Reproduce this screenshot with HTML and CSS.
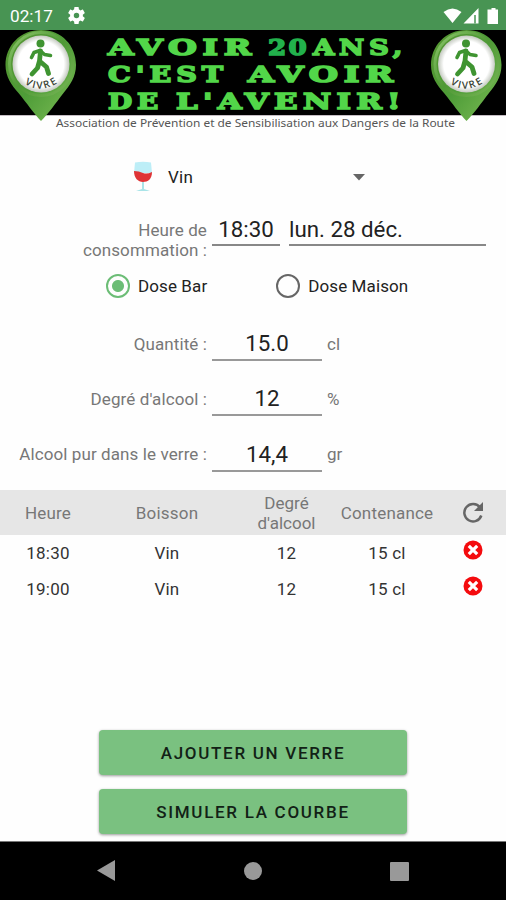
FILE: index.html
```html
<!DOCTYPE html>
<html lang="fr">
<head>
<meta charset="utf-8">
<title>Vivre</title>
<link rel="stylesheet" href="styles.css">
</head>
<body>
<div class="app">
  <header class="status">
    <span class="clock">02:17</span>
    <svg class="gear" width="17" height="17" viewBox="2 2 20 20"><path fill="#fff" d="M19.43 12.98c.04-.32.07-.64.07-.98s-.03-.66-.07-.98l2.11-1.65c.19-.15.24-.42.12-.64l-2-3.46c-.12-.22-.39-.3-.61-.22l-2.49 1c-.52-.4-1.08-.73-1.69-.98l-.38-2.65C14.46 2.18 14.25 2 14 2h-4c-.25 0-.46.18-.49.42l-.38 2.65c-.61.25-1.17.59-1.69.98l-2.49-1c-.23-.09-.49 0-.61.22l-2 3.46c-.13.22-.07.49.12.64l2.11 1.65c-.04.32-.07.65-.07.98s.03.66.07.98l-2.11 1.65c-.19.15-.24.42-.12.64l2 3.46c.12.22.39.3.61.22l2.49-1c.52.4 1.08.73 1.69.98l.38 2.65c.03.24.24.42.49.42h4c.25 0 .46-.18.49-.42l.38-2.65c.61-.25 1.17-.59 1.69-.98l2.49 1c.23.09.49 0 .61-.22l2-3.46c.12-.22.07-.49-.12-.64zM12 15.200a3.200 3.200 0 1 1 0-6.400 3.200 3.200 0 0 1 0 6.400z"/></svg>
    <svg class="signals" width="56" height="18" viewBox="0 0 56 18"><path fill="#fff" d="M.5 5Q9.500-2 18.500 5l-9 11ZM20.500 16.500 35.500 1v15.500ZM46.500 2.500h2V1h4v1.500H55V17H44.500V2.500Z"/><path d="M32 8v8.500" stroke="#489453" stroke-width="1.500"/></svg>
  </header>

  <svg class="banner" width="506" height="105" viewBox="0 30 506 105">
    <defs>
      <linearGradient id="pinFill" x1="0" y1="0" x2="1" y2="1"><stop offset="0" stop-color="#55942f"/><stop offset=".5" stop-color="#4e9c38"/><stop offset=".75" stop-color="#66ad47"/><stop offset="1" stop-color="#3c7d25"/></linearGradient>
      <linearGradient id="ring" x1="0" y1="0" x2="1" y2="1"><stop offset="0" stop-color="#8cc66b"/><stop offset=".5" stop-color="#4f9835"/><stop offset="1" stop-color="#79b758"/></linearGradient>
      <radialGradient id="disc"><stop offset=".8" stop-color="#fff"/><stop offset="1" stop-color="#c4c9c0"/></radialGradient>
      <path id="arc" d="M24.500 83.500Q41 95.500 62 80"/>
      <g id="pin">
        <path fill="url(#pinFill)" d="M41 30C20 30 5.500 46 5.500 65c0 12 6 20 13 28 9 11 15 20 22.500 28 8-8 14-17 22.500-28C70 85 76 77 76 65 76 46 62 30 41 30Z"/>
        <circle cx="41" cy="64" r="31.500" fill="none" stroke="url(#ring)" stroke-width="3"/>
        <circle cx="41" cy="64" r="28.500" fill="url(#disc)"/>
        <circle cx="40.500" cy="43.500" r="4" fill="#3f9431"/>
        <path fill="none" stroke="#3f9431" stroke-width="3.600" stroke-linecap="round" stroke-linejoin="round" d="M31.500 57.500 34 52.500 40 50.500 44.500 54.500 50.500 55.500"/>
        <path fill="none" stroke="#3f9431" stroke-width="4.800" stroke-linecap="round" stroke-linejoin="round" d="M40.500 51 39.500 61 46.500 67 48.500 73.500M39.500 61 37.500 68 32 74"/>
        <text class="pin-label"><textPath href="#arc">VIVRE</textPath></text>
      </g>
    </defs>
    <path fill="#000" d="M0 30h506v85H0z"/>
    <path stroke="#c5bdc4" d="M0 115.500h506"/>
    <g class="slogan">
      <text x="108" y="54.500" textLength="149" lengthAdjust="spacingAndGlyphs">AVOIR</text>
      <text class="twenty" x="268" y="54.500" textLength="41" lengthAdjust="spacingAndGlyphs">20</text>
      <text x="313" y="54.500" textLength="94" lengthAdjust="spacingAndGlyphs">ANS,</text>
      <text x="108" y="81.500" textLength="120" lengthAdjust="spacingAndGlyphs">C'EST</text>
      <text x="248" y="81.500" textLength="151" lengthAdjust="spacingAndGlyphs">AVOIR</text>
      <text x="108" y="108.500" textLength="55" lengthAdjust="spacingAndGlyphs">DE</text>
      <text x="176" y="108.500" textLength="230" lengthAdjust="spacingAndGlyphs">L'AVENIR!</text>
    </g>
    <text class="association" x="56" y="127" textLength="399" lengthAdjust="spacingAndGlyphs">Association de Prévention et de Sensibilisation aux Dangers de la Route</text>
    <use href="#pin"/>
    <use href="#pin" x="425.500"/>
  </svg>

  <main class="form">
    <div class="spinner">
      <svg width="20" height="32" viewBox="0 0 20 32"><path fill="#bdeef7" d="M2 1.500Q10 0 18 1.500L19 12H1Z"/><path fill="#df3436" d="M1 10q5 0 9 2 4 1.500 9-1c0 7-4 10-9 10S1 17 1 10Z"/><path fill="#a9e4e8" d="M9 21h2v7l6 2H3l6-2Z"/></svg>
      <span class="spinner-text">Vin</span>
      <svg class="caret" width="12" height="7" viewBox="0 0 12 7"><path fill="#666" d="M0 0h12L6 6.500Z"/></svg>
    </div>
    <div class="row row-time">
      <label class="label">Heure de<br>consommation :</label>
      <span class="field time">18:30</span>
      <span class="field date">lun. 28 déc.</span>
    </div>
    <div class="radios">
      <span class="radio on"></span><span class="radio-text">Dose Bar</span>
      <span class="radio second"></span><span class="radio-text">Dose Maison</span>
    </div>
    <div class="row"><label class="label">Quantité :</label><span class="field">15.0</span><span class="unit">cl</span></div>
    <div class="row"><label class="label">Degré d'alcool :</label><span class="field">12</span><span class="unit">%</span></div>
    <div class="row"><label class="label">Alcool pur dans le verre :</label><span class="field">14,4</span><span class="unit">gr</span></div>
  </main>

  <section class="drinks">
    <div class="line head">
      <span>Heure</span><span>Boisson</span><span class="degree">Degré<br>d'alcool</span><span>Contenance</span>
      <svg width="24" height="24" viewBox="0 0 24 24"><path fill="none" stroke="#666" stroke-width="2.500" d="M19 6.500A8.700 8.700 0 1 0 20.300 14.500"/><path fill="#666" d="M22 1v9h-9Z"/></svg>
    </div>
    <div class="line">
      <span>18:30</span><span>Vin</span><span>12</span><span>15 cl</span>
      <svg class="delete" width="20" height="20" viewBox="0 0 20 20"><circle cx="10" cy="10" r="9.500" fill="#f40b0e"/><path stroke="#fff" stroke-width="3.200" d="m5.800 5.800 8.400 8.400m0-8.400-8.400 8.400"/></svg>
    </div>
    <div class="line">
      <span>19:00</span><span>Vin</span><span>12</span><span>15 cl</span>
      <svg class="delete" width="20" height="20" viewBox="0 0 20 20"><circle cx="10" cy="10" r="9.500" fill="#f40b0e"/><path stroke="#fff" stroke-width="3.200" d="m5.800 5.800 8.400 8.400m0-8.400-8.400 8.400"/></svg>
    </div>
  </section>

  <div class="actions">
    <button class="action">AJOUTER UN VERRE</button>
    <button class="action">SIMULER LA COURBE</button>
  </div>

  <nav class="navbar">
    <svg width="18" height="22" viewBox="0 0 18 22"><path fill="#999" d="M18 0v21L0 10.500Z"/></svg>
    <svg width="18" height="18" viewBox="0 0 18 18"><circle cx="9" cy="9" r="9" fill="#999"/></svg>
    <svg width="19" height="19" viewBox="0 0 19 19"><rect width="19" height="19" rx="1" fill="#999"/></svg>
  </nav>
</div>
</body>
</html>
```
FILE: styles.css
```css
* { box-sizing: border-box; }
body { margin: 0; background: #fff; font-family: Roboto, "Liberation Sans", sans-serif; font-size: 17px; color: #222; }
svg { display: block; flex: none; }
.app { width: 506px; height: 900px; display: flex; flex-direction: column; overflow: hidden; background: #fefefe; }
.status { height: 30px; flex: none; display: flex; align-items: center; background: #489453; padding: 1px 7px 0 10px; color: #fff; }
.clock { font-size: 17.2px; width: 58px; }
.signals { margin-left: auto; }
.banner { flex: none; }
.pin-label { font: 600 10px "Open Sans", sans-serif; letter-spacing: 1.9px; fill: #3c4637; }
.slogan { font: bold 23px "DejaVu Serif", serif; letter-spacing: 4px; fill: #52d649; stroke: #52d649; stroke-width: 1.6px; }
.twenty { fill: #22b14c; stroke: #22b14c; letter-spacing: 2px; }
.association { font: 11.500px "Noto Sans", sans-serif; fill: #555; }

.form { height: 355px; flex: none; }
.spinner { height: 84px; display: flex; align-items: center; padding: 0 141px 0 133px; }
.spinner-text { margin-left: 15px; letter-spacing: .3px; }
.caret { margin-left: auto; }
.row { height: 55.300px; display: flex; align-items: center; }
.row-time { height: 40px; align-items: flex-start; }
.label { width: 207px; margin-right: 5px; text-align: right; color: #777; line-height: 20px; letter-spacing: .1px; }
.row-time .label { padding-top: 1px; }
.field { width: 110px; height: 35px; line-height: 34px; border-bottom: 2px solid #999; text-align: center; font-size: 22.300px; }
.time { width: 68px; margin-right: 9px; }
.date { width: 197px; text-align: left; }
.row-time .field { height: 31px; margin-top: -4px; line-height: 29px; border-color: #888; }
.unit { margin-left: 5px; color: #777; }
.radios { height: 52px; margin-bottom: 5px; display: flex; align-items: center; padding: 1px 0 0 106px; }
.radio { width: 24px; height: 24px; border: 2px solid #666; border-radius: 50%; margin-right: 8px; }
.radio.on { border-color: #6cbd76; background: radial-gradient(circle, #6cbd76 5.500px, transparent 6.500px); }
.radio-text { letter-spacing: .1px; }
.second { margin-left: 69px; }

.drinks { flex: none; }
.line { height: 36px; display: grid; grid-template-columns: 96px 142px 97px 104px 67px; align-items: center; justify-items: center; color: #333; letter-spacing: .2px; }
.head { height: 45px; background: #e6e6e6; color: #777; letter-spacing: .2px; }
.degree { line-height: 20px; text-align: center; letter-spacing: 0; }
.delete { margin-top: -6px; }

.actions { margin-top: 123px; flex: none; display: flex; flex-direction: column; align-items: center; gap: 14px; }
.action { width: 308px; height: 45px; border: 0; border-radius: 4px; background: #7ac180; box-shadow: 0 1px 3px #0006; font: 500 17px Roboto, sans-serif; letter-spacing: 1.700px; color: #122116; }
.navbar { margin-top: auto; flex: none; height: 59px; background: #000; border-top: 1px solid #777; display: flex; align-items: center; justify-content: space-between; padding: 0 97px; }
```
